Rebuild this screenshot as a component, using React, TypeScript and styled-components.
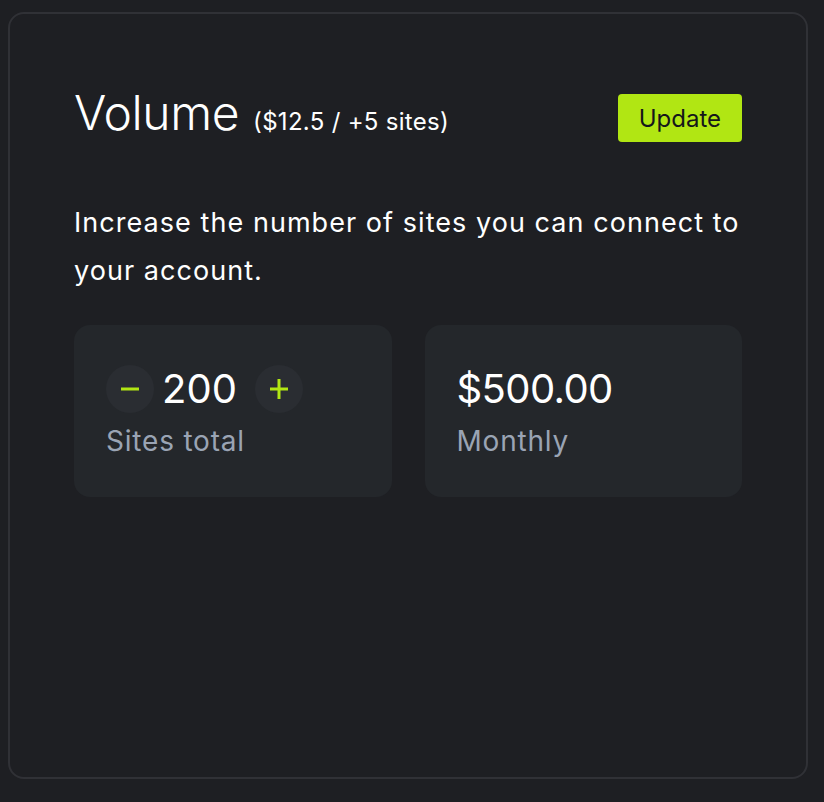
import React, { useState } from "react";
import styled, { createGlobalStyle } from "styled-components";

const GlobalStyle = createGlobalStyle`
  html, body {
    margin: 0;
    padding: 0;
    background: #1e1f23;
  }
  body {
    font-family: Inter, "Noto Sans", sans-serif;
    color: #ffffff;
  }
  * { box-sizing: border-box; }
`;

const Page = styled.div`
  padding: 12px 16px 23px 8px;
`;

const Panel = styled.section`
  width: 800px;
  height: 767px;
  border: 2px solid #303136;
  border-radius: 16px;
  background: #1e1f23;
  padding: 64px;
  display: flex;
  flex-direction: column;
`;

const Header = styled.div`
  display: flex;
  justify-content: space-between;
  align-items: flex-start;
`;

const Title = styled.h2`
  margin: 0;
  font-size: 48px;
  line-height: 69px;
  font-weight: 300;
  letter-spacing: -0.4px;
  color: #ffffff;
`;

const Note = styled.span`
  font-size: 24px;
  font-weight: 400;
  margin-left: 14px;
  letter-spacing: 0.3px;
`;

const UpdateButton = styled.button`
  margin-top: 16px;
  height: 48px;
  padding: 0 21px;
  border: none;
  border-radius: 4px;
  background: #b1e613;
  color: #15171a;
  font-family: Inter, sans-serif;
  font-size: 24px;
  font-weight: 400;
  cursor: pointer;
`;

const Description = styled.p`
  margin: 43px 0 0;
  font-size: 27px;
  line-height: 48px;
  letter-spacing: 1.05px;
  color: #ffffff;
`;

const Cards = styled.div`
  margin-top: 30px;
  display: grid;
  grid-template-columns: 1fr 1fr;
  gap: 33px;
`;

const Card = styled.div`
  background: #24272b;
  border-radius: 16px;
  padding: 40px 32px 32px;
  display: flex;
  flex-direction: column;
`;

const ValueRow = styled.div`
  display: flex;
  align-items: center;
  height: 48px;
`;

const Value = styled.span<{ $stepper?: boolean }>`
  font-size: 40px;
  line-height: 48px;
  font-weight: 400;
  color: #ffffff;
  letter-spacing: ${(p) => (p.$stepper ? "0" : "-0.6px")};
  margin: ${(p) => (p.$stepper ? "0 18px 0 8px" : "0")};
`;

const StepButton = styled.button`
  width: 48px;
  height: 48px;
  border-radius: 50%;
  border: none;
  padding: 0;
  background: #2a2d32;
  display: flex;
  align-items: center;
  justify-content: center;
  cursor: pointer;
`;

const Label = styled.div`
  margin-top: 4px;
  font-size: 28px;
  line-height: 48px;
  color: #9aa4b4;
  letter-spacing: 0.8px;
`;

const Minus = () => (
  <svg width="20" height="20" viewBox="0 0 20 20">
    <rect x="1" y="8.5" width="18" height="3" fill="#b1e613" />
  </svg>
);

const Plus = () => (
  <svg width="20" height="20" viewBox="0 0 20 20">
    <rect x="1" y="8.5" width="18" height="3" fill="#b1e613" />
    <rect x="8.5" y="0" width="3" height="20" fill="#b1e613" />
  </svg>
);

export default function App() {
  const [sites, setSites] = useState(200);
  const price = (sites / 5) * 12.5;
  return (
    <>
      <GlobalStyle />
      <Page>
        <Panel>
          <Header>
            <Title>
              Volume<Note>($12.5 / +5 sites)</Note>
            </Title>
            <UpdateButton>Update</UpdateButton>
          </Header>
          <Description>
            Increase the number of sites you can connect to your account.
          </Description>
          <Cards>
            <Card>
              <ValueRow>
                <StepButton aria-label="decrease" onClick={() => setSites((s) => Math.max(5, s - 5))}>
                  <Minus />
                </StepButton>
                <Value $stepper>{sites}</Value>
                <StepButton aria-label="increase" onClick={() => setSites((s) => s + 5)}>
                  <Plus />
                </StepButton>
              </ValueRow>
              <Label>Sites total</Label>
            </Card>
            <Card>
              <ValueRow>
                <Value>${price.toFixed(2)}</Value>
              </ValueRow>
              <Label>Monthly</Label>
            </Card>
          </Cards>
        </Panel>
      </Page>
    </>
  );
}
